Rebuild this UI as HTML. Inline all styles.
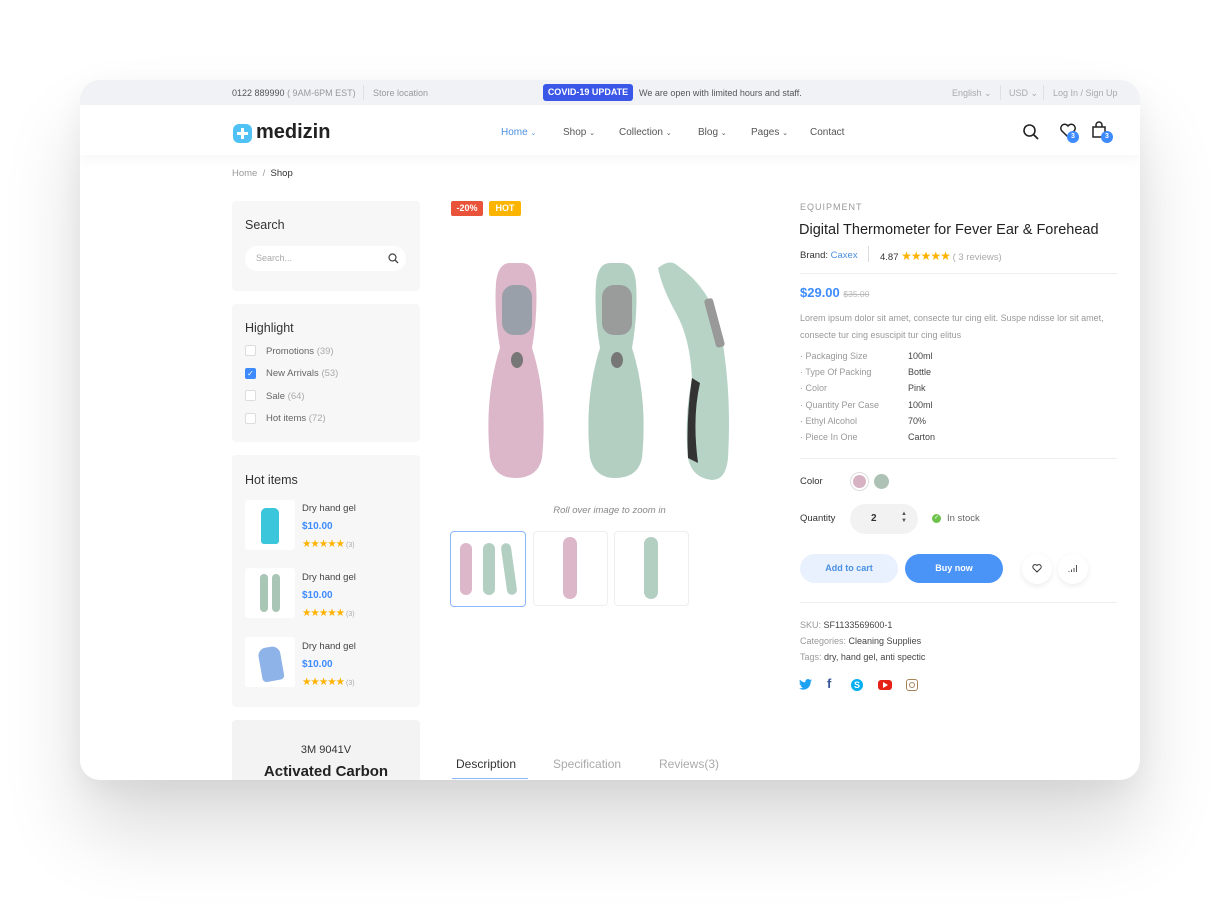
<!DOCTYPE html>
<html><head><meta charset="utf-8"><style>
*{box-sizing:border-box;margin:0;padding:0}
body{width:1220px;height:912px;background:#fff;font-family:"Liberation Sans",sans-serif;position:relative;overflow:hidden;color:#333}
.frame{position:absolute;left:80px;top:80px;width:1060px;height:700px;border-radius:20px;background:#fff;box-shadow:0 50px 80px rgba(0,0,0,.14),0 10px 30px rgba(0,0,0,.05);overflow:hidden}
.a{position:absolute;white-space:nowrap}
.top{position:absolute;left:0;top:0;width:1060px;height:25px;background:#f1f2f6}
.nav{position:absolute;left:0;top:25px;width:1060px;height:50px;background:#fff;box-shadow:0 6px 12px rgba(0,0,0,.03)}
.s{font-size:9px;color:#999}
.box{position:absolute;background:#f7f7f7;border-radius:4px}
.cb{position:absolute;width:11px;height:11px;border:1px solid #ddd;background:#fff;border-radius:2px}
.li{font-size:9.5px;color:#666}
.li span{color:#aaa}
.price{color:#3d8bff;font-weight:bold}
.stars{color:#ffb300;letter-spacing:-1px}
.spec{font-size:9px;color:#999}
.spec b{font-weight:normal;color:#444;position:absolute;left:108px}
</style></head><body>
<div class="frame">
<div class="top"></div>
<div class="a s" style="left:152px;top:8px;color:#555">0122 889990 <span style="color:#999">( 9AM-6PM EST)</span></div>
<div class="a" style="left:283px;top:5px;width:1px;height:15px;background:#e0e0e0"></div>
<div class="a s" style="left:293px;top:8px">Store location</div>
<div class="a" style="left:463px;top:4px;width:90px;height:17px;background:#3a57e8;border-radius:3px;color:#fff;font-size:9px;font-weight:bold;text-align:center;line-height:17px">COVID-19 UPDATE</div>
<div class="a s" style="left:559px;top:8px;color:#555">We are open with limited hours and staff.</div>
<div class="a s" style="left:872px;top:8px;color:#aaa">English ⌄</div>
<div class="a" style="left:920px;top:5px;width:1px;height:15px;background:#e0e0e0"></div>
<div class="a s" style="left:929px;top:8px;color:#aaa">USD ⌄</div>
<div class="a" style="left:963px;top:5px;width:1px;height:15px;background:#e0e0e0"></div>
<div class="a s" style="left:973px;top:8px;color:#aaa">Log In / Sign Up</div>

<div class="nav"></div>
<div class="a" style="left:153px;top:44px;width:19px;height:19px;background:#4fc1f5;border-radius:6px"></div>
<div class="a" style="left:161px;top:48px;width:3px;height:11px;background:#fff"></div>
<div class="a" style="left:157px;top:52px;width:11px;height:3px;background:#fff"></div>
<div class="a" style="left:176px;top:41px;font-size:20px;font-weight:bold;color:#222">medizin</div>
<div class="a" style="left:421px;top:47px;font-size:10px;color:#4a90e2">Home <span style="font-size:7px">⌄</span></div>
<div class="a" style="left:483px;top:47px;font-size:10px;color:#555">Shop <span style="font-size:7px">⌄</span></div>
<div class="a" style="left:539px;top:47px;font-size:10px;color:#555">Collection <span style="font-size:7px">⌄</span></div>
<div class="a" style="left:618px;top:47px;font-size:10px;color:#555">Blog <span style="font-size:7px">⌄</span></div>
<div class="a" style="left:671px;top:47px;font-size:10px;color:#555">Pages <span style="font-size:7px">⌄</span></div>
<div class="a" style="left:730px;top:47px;font-size:10px;color:#555">Contact</div>
<svg class="a" style="left:942px;top:43px" width="18" height="18" viewBox="0 0 18 18"><circle cx="7.5" cy="7.5" r="5.5" fill="none" stroke="#222" stroke-width="1.6"/><path d="M11.5 11.5L16 16" stroke="#222" stroke-width="1.8"/></svg>
<svg class="a" style="left:979px;top:43px" width="18" height="16" viewBox="0 0 18 16"><path d="M9 14L2.5 7.5A3.5 3.5 0 0 1 9 3a3.5 3.5 0 0 1 6.5 4.5z" fill="none" stroke="#222" stroke-width="1.5"/></svg>
<div class="a" style="left:987px;top:51px;width:12px;height:12px;border-radius:50%;background:#3d8bff;color:#fff;font-size:7px;text-align:center;line-height:12px;font-weight:bold">3</div>
<svg class="a" style="left:1011px;top:41px" width="16" height="18" viewBox="0 0 16 18"><path d="M2 6h12v10H2z M5 6V4a3 3 0 0 1 6 0v2" fill="none" stroke="#222" stroke-width="1.5"/></svg>
<div class="a" style="left:1021px;top:51px;width:12px;height:12px;border-radius:50%;background:#3d8bff;color:#fff;font-size:7px;text-align:center;line-height:12px;font-weight:bold">3</div>

<div class="a" style="left:152px;top:88px;font-size:9.5px;color:#999">Home &nbsp;/&nbsp; <span style="color:#333">Shop</span></div>

<!-- sidebar -->
<div class="box" style="left:152px;top:121px;width:188px;height:90px"></div>
<div class="a" style="left:165px;top:138px;font-size:12.5px;color:#333">Search</div>
<div class="a" style="left:165px;top:166px;width:161px;height:25px;background:#fff;border-radius:13px"></div>
<div class="a" style="left:176px;top:173px;font-size:9px;color:#aaa">Search...</div>
<svg class="a" style="left:308px;top:173px" width="11" height="11" viewBox="0 0 11 11"><circle cx="4.5" cy="4.5" r="3.5" fill="none" stroke="#444" stroke-width="1.2"/><path d="M7 7l3 3" stroke="#444" stroke-width="1.3"/></svg>

<div class="box" style="left:152px;top:224px;width:188px;height:138px"></div>
<div class="a" style="left:165px;top:241px;font-size:12.5px;color:#333">Highlight</div>
<div class="cb" style="left:165px;top:265px"></div><div class="a li" style="left:186px;top:266px">Promotions <span>(39)</span></div>
<div class="cb" style="left:165px;top:288px;background:#3d8bff;border-color:#3d8bff;color:#fff;font-size:8px;line-height:9px;text-align:center">✓</div><div class="a li" style="left:186px;top:288px">New Arrivals <span>(53)</span></div>
<div class="cb" style="left:165px;top:310px"></div><div class="a li" style="left:186px;top:311px">Sale <span>(64)</span></div>
<div class="cb" style="left:165px;top:333px"></div><div class="a li" style="left:186px;top:333px">Hot items <span>(72)</span></div>

<div class="box" style="left:152px;top:375px;width:188px;height:252px"></div>
<div class="a" style="left:165px;top:393px;font-size:12.5px;color:#333">Hot items</div>
<div class="a" style="left:165px;top:420px;width:50px;height:50px;background:#fff;border-radius:3px"></div>
<div class="a" style="left:181px;top:428px;width:18px;height:36px;background:#3cc6dc;border-radius:5px 5px 3px 3px"></div>
<div class="a" style="left:165px;top:488px;width:50px;height:50px;background:#fff;border-radius:3px"></div>
<div class="a" style="left:180px;top:494px;width:8px;height:38px;background:#a9c5b5;border-radius:4px"></div>
<div class="a" style="left:192px;top:494px;width:8px;height:38px;background:#a9c5b5;border-radius:4px"></div>
<div class="a" style="left:165px;top:557px;width:50px;height:50px;background:#fff;border-radius:3px"></div>
<div class="a" style="left:180px;top:567px;width:22px;height:34px;background:#8db3e8;border-radius:8px 8px 4px 4px;transform:rotate(-10deg)"></div>
<div class="a" style="left:222px;top:423px;font-size:9.5px;color:#444">Dry hand gel</div>
<div class="a price" style="left:222px;top:441px;font-size:10px">$10.00</div>
<div class="a stars" style="left:222px;top:458px;font-size:10.5px">★★★★★ <span style="color:#aaa;font-size:7px;letter-spacing:0">(3)</span></div>
<div class="a" style="left:222px;top:492px;font-size:9.5px;color:#444">Dry hand gel</div>
<div class="a price" style="left:222px;top:510px;font-size:10px">$10.00</div>
<div class="a stars" style="left:222px;top:527px;font-size:10.5px">★★★★★ <span style="color:#aaa;font-size:7px;letter-spacing:0">(3)</span></div>
<div class="a" style="left:222px;top:561px;font-size:9.5px;color:#444">Dry hand gel</div>
<div class="a price" style="left:222px;top:579px;font-size:10px">$10.00</div>
<div class="a stars" style="left:222px;top:596px;font-size:10.5px">★★★★★ <span style="color:#aaa;font-size:7px;letter-spacing:0">(3)</span></div>

<div class="box" style="left:152px;top:640px;width:188px;height:80px;background:#f3f3f3"></div>
<div class="a" style="left:152px;top:664px;width:188px;text-align:center;font-size:11px;color:#333">3M 9041V</div>
<div class="a" style="left:152px;top:683px;width:188px;text-align:center;font-size:15px;font-weight:bold;color:#222">Activated Carbon</div>

<!-- gallery -->
<div class="a" style="left:371px;top:121px;width:32px;height:15px;background:#e8533a;border-radius:2px;color:#fff;font-size:9px;font-weight:bold;text-align:center;line-height:15px">-20%</div>
<div class="a" style="left:409px;top:121px;width:32px;height:15px;background:#fbb400;border-radius:2px;color:#fff;font-size:9px;font-weight:bold;text-align:center;line-height:15px">HOT</div>
<svg class="a" style="left:400px;top:178px" width="260" height="230" viewBox="0 0 260 230">
<path d="M30 5Q18 5 16 25Q14 55 20 90Q4 140 10 200Q15 220 35 220Q58 220 62 200Q68 140 52 90Q58 55 56 25Q54 5 42 5z" fill="#dcb6c9"/>
<rect x="22" y="27" width="30" height="50" rx="12" fill="#9aa0aa"/><ellipse cx="37" cy="102" rx="6" ry="8" fill="#777"/>
<path d="M130 5Q118 5 116 25Q114 55 120 90Q104 140 110 200Q115 220 135 220Q158 220 162 200Q168 140 152 90Q158 55 156 25Q154 5 142 5z" fill="#b3cfc2"/>
<rect x="122" y="27" width="30" height="50" rx="12" fill="#9a9c9c"/><ellipse cx="137" cy="102" rx="6" ry="8" fill="#777"/>
<path d="M178 10Q190 0 198 8Q230 30 240 70Q252 130 248 200Q246 222 232 222Q212 220 208 200Q204 160 212 120Q210 80 196 55Q182 30 178 10z" fill="#b6d3c6"/>
<path d="M212 120Q206 160 208 200L218 205Q212 160 220 125z" fill="#333"/>
<rect x="230" y="40" width="9" height="50" rx="3" fill="#999" transform="rotate(-15 234 65)"/>
</svg>
<div class="a" style="left:370px;top:425px;width:319px;text-align:center;font-size:9.5px;font-style:italic;color:#888">Roll over image to zoom in</div>
<div class="a" style="left:370px;top:451px;width:76px;height:76px;border:1px solid #8ab8ff;border-radius:4px"></div>
<div class="a" style="left:453px;top:451px;width:75px;height:75px;border:1px solid #eee;border-radius:4px"></div>
<div class="a" style="left:534px;top:451px;width:75px;height:75px;border:1px solid #eee;border-radius:4px"></div>
<div class="a" style="left:380px;top:463px;width:12px;height:52px;background:#dcb6c9;border-radius:6px"></div>
<div class="a" style="left:403px;top:463px;width:12px;height:52px;background:#b3cfc2;border-radius:6px"></div>
<div class="a" style="left:424px;top:463px;width:10px;height:52px;background:#b3cfc2;border-radius:6px;transform:rotate(-8deg)"></div>
<div class="a" style="left:483px;top:457px;width:14px;height:62px;background:#dcb6c9;border-radius:7px"></div>
<div class="a" style="left:564px;top:457px;width:14px;height:62px;background:#b3cfc2;border-radius:7px"></div>

<div class="a" style="left:376px;top:677px;font-size:12px;color:#333">Description</div>
<div class="a" style="left:372px;top:698px;width:76px;height:1px;background:#8ab8ff"></div>
<div class="a" style="left:473px;top:677px;font-size:12px;color:#aaa">Specification</div>
<div class="a" style="left:579px;top:677px;font-size:12px;color:#aaa">Reviews(3)</div>

<!-- details -->
<div class="a" style="left:720px;top:122px;font-size:9px;letter-spacing:1px;color:#999">EQUIPMENT</div>
<div class="a" style="left:719px;top:142px;font-size:14.5px;color:#222">Digital Thermometer for Fever Ear &amp; Forehead</div>
<div class="a" style="left:720px;top:170px;font-size:9.5px;color:#333">Brand: <span style="color:#4a90e2">Caxex</span></div>
<div class="a" style="left:788px;top:166px;width:1px;height:16px;background:#ddd"></div>
<div class="a" style="left:800px;top:169px;font-size:9.5px;color:#333">4.87 <span class="stars" style="font-size:12px">★★★★★</span> <span style="color:#aaa">( 3 reviews)</span></div>
<div class="a" style="left:720px;top:193px;width:317px;height:1px;background:#eee"></div>
<div class="a price" style="left:720px;top:205px;font-size:13px">$29.00 <span style="font-size:8.5px;color:#bbb;font-weight:normal;text-decoration:line-through">$35.00</span></div>
<div class="a" style="left:720px;top:230px;font-size:9px;line-height:16.5px;color:#999;white-space:normal;width:310px">Lorem ipsum dolor sit amet, consecte tur cing elit. Suspe ndisse lor sit amet, consecte tur cing esuscipit tur cing elitus</div>
<div class="a spec" style="left:720px;top:271px;width:200px">· Packaging Size<b>100ml</b></div>
<div class="a spec" style="left:720px;top:287px;width:200px">· Type Of Packing<b>Bottle</b></div>
<div class="a spec" style="left:720px;top:303px;width:200px">· Color<b>Pink</b></div>
<div class="a spec" style="left:720px;top:320px;width:200px">· Quantity Per Case<b>100ml</b></div>
<div class="a spec" style="left:720px;top:336px;width:200px">· Ethyl Alcohol<b>70%</b></div>
<div class="a spec" style="left:720px;top:352px;width:200px">· Piece In One<b>Carton</b></div>
<div class="a" style="left:720px;top:378px;width:317px;height:1px;background:#eee"></div>
<div class="a" style="left:720px;top:396px;font-size:9.5px;color:#333">Color</div>
<div class="a" style="left:770px;top:392px;width:19px;height:19px;border-radius:50%;border:1px solid #ddd"></div>
<div class="a" style="left:773px;top:395px;width:13px;height:13px;border-radius:50%;background:#d6b2c2"></div>
<div class="a" style="left:794px;top:394px;width:15px;height:15px;border-radius:50%;background:#adc2b4"></div>
<div class="a" style="left:720px;top:433px;font-size:9.5px;color:#333">Quantity</div>
<div class="a" style="left:770px;top:424px;width:68px;height:30px;border-radius:15px;background:#f2f2f2"></div>
<div class="a" style="left:791px;top:433px;font-size:10px;font-weight:bold;color:#333">2</div>
<div class="a" style="left:821px;top:431px;font-size:6px;line-height:7px;color:#555">▲<br>▼</div>
<div class="a" style="left:852px;top:434px;width:9px;height:9px;border-radius:50%;background:#6cc24a;color:#fff;font-size:6px;text-align:center;line-height:9px">✓</div>
<div class="a" style="left:867px;top:433px;font-size:9.5px;color:#666">In stock</div>
<div class="a" style="left:720px;top:474px;width:98px;height:29px;border-radius:15px;background:#e8f1fd;color:#4a90e2;font-size:9px;font-weight:bold;text-align:center;line-height:29px">Add to cart</div>
<div class="a" style="left:825px;top:474px;width:98px;height:29px;border-radius:15px;background:#4a94f7;color:#fff;font-size:9px;font-weight:bold;text-align:center;line-height:29px">Buy now</div>
<div class="a" style="left:942px;top:474px;width:30px;height:30px;border-radius:50%;background:#fff;box-shadow:0 2px 6px rgba(0,0,0,.08)"></div>
<svg class="a" style="left:952px;top:484px" width="10" height="9" viewBox="0 0 10 9"><path d="M5 8L1.3 4.3A2 2 0 0 1 5 1.5a2 2 0 0 1 3.7 2.8z" fill="none" stroke="#333" stroke-width="1"/></svg>
<div class="a" style="left:978px;top:474px;width:30px;height:30px;border-radius:50%;background:#fff;box-shadow:0 2px 6px rgba(0,0,0,.08)"></div>
<svg class="a" style="left:988px;top:484px" width="10" height="9" viewBox="0 0 10 9"><path d="M1 8v-1M3.5 8V5.5M6 8V4M8.5 8V1" stroke="#555" stroke-width="1"/></svg>
<div class="a" style="left:720px;top:522px;width:317px;height:1px;background:#eee"></div>
<div class="a" style="left:720px;top:540px;font-size:9px;color:#999">SKU: <span style="color:#444">SF1133569600-1</span></div>
<div class="a" style="left:720px;top:556px;font-size:9px;color:#999">Categories: <span style="color:#444">Cleaning Supplies</span></div>
<div class="a" style="left:720px;top:572px;font-size:9px;color:#999">Tags: <span style="color:#444">dry, hand gel, anti spectic</span></div>
<svg class="a" style="left:719px;top:599px" width="13" height="11" viewBox="0 0 24 20"><path d="M24 2.4a10 10 0 0 1-2.8.8A5 5 0 0 0 23.3.4a10 10 0 0 1-3.1 1.2A4.9 4.9 0 0 0 11.8 6 14 14 0 0 1 1.7.9a4.9 4.9 0 0 0 1.5 6.6A4.9 4.9 0 0 1 1 6.9 4.9 4.9 0 0 0 4.9 11.8a5 5 0 0 1-2.2.1 4.9 4.9 0 0 0 4.6 3.4A9.9 9.9 0 0 1 0 17.3 14 14 0 0 0 7.5 19.5c9.1 0 14-7.5 14-14v-.6A10 10 0 0 0 24 2.4z" fill="#1da1f2"/></svg>
<div class="a" style="left:747px;top:596px;font-size:13px;font-weight:bold;color:#3b5998">f</div>
<div class="a" style="left:771px;top:599px;width:12px;height:12px;border-radius:50%;background:#00aff0;color:#fff;font-size:9px;font-weight:bold;text-align:center;line-height:12px">S</div>
<div class="a" style="left:798px;top:600px;width:14px;height:10px;border-radius:3px;background:#e62117"></div>
<div class="a" style="left:803px;top:602px;width:0;height:0;border-left:5px solid #fff;border-top:3px solid transparent;border-bottom:3px solid transparent"></div>
<div class="a" style="left:826px;top:599px;width:12px;height:12px;border-radius:3px;border:1.5px solid #a8835a"></div>
<div class="a" style="left:829px;top:602px;width:6px;height:6px;border-radius:50%;border:1.3px solid #a8835a"></div>
</div>
</body></html>
